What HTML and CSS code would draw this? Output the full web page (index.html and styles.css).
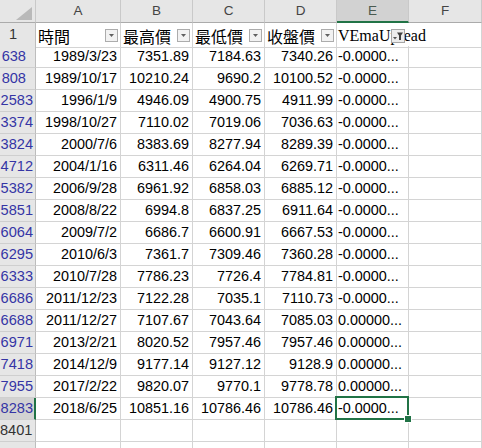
FILE: index.html
```html
<!DOCTYPE html>
<html lang="zh-Hant">
<head>
<meta charset="utf-8">
<title>Sheet</title>
<link rel="stylesheet" href="styles.css">
</head>
<body>
<div class="sheet">
  <div class="row hdr">
    <div class="corner"><svg width="35" height="22" viewBox="0 0 35 22"><polygon points="32,7 32,20 16,20" fill="#b9b9b9"/></svg></div>
    <div class="ch">A</div>
    <div class="ch">B</div>
    <div class="ch">C</div>
    <div class="ch">D</div>
    <div class="ch sel">E</div>
    <div class="ch">F</div>
  </div>
  <div class="row r1">
    <div class="rh one">1</div>
    <div class="th"><span class="tt">時間</span><span class="fb"><svg width="11" height="11" viewBox="0 0 11 11"><polygon points="3,4 8,4 5.5,7" fill="#606060"/></svg></span></div>
    <div class="th"><span class="tt">最高價</span><span class="fb"><svg width="11" height="11" viewBox="0 0 11 11"><polygon points="3,4 8,4 5.5,7" fill="#606060"/></svg></span></div>
    <div class="th"><span class="tt">最低價</span><span class="fb"><svg width="11" height="11" viewBox="0 0 11 11"><polygon points="3,4 8,4 5.5,7" fill="#606060"/></svg></span></div>
    <div class="th"><span class="tt">收盤價</span><span class="fb"><svg width="11" height="11" viewBox="0 0 11 11"><polygon points="3,4 8,4 5.5,7" fill="#606060"/></svg></span></div>
    <div class="th th-e"><span class="tt latin">VEmaUpread</span><span class="fb fb-on"><svg width="12" height="12" viewBox="0 0 12 12"><polygon points="1,7 5,7 3,9.5" fill="#555"/><polygon points="5,2.5 11,2.5 9,5.5 9,10 7,10 7,5.5" fill="#404040"/></svg></span></div>
    <div class="empty noline"></div>
  </div>

  <div class="row"><div class="rh b3">638</div><div class="n">1989/3/23</div><div class="n">7351.89</div><div class="n">7184.63</div><div class="n">7340.26</div><div class="t">-0.0000...</div><div class="empty"></div></div>
  <div class="row"><div class="rh b3">808</div><div class="n">1989/10/17</div><div class="n">10210.24</div><div class="n">9690.2</div><div class="n">10100.52</div><div class="t">-0.0000...</div><div class="empty"></div></div>
  <div class="row"><div class="rh b4">2583</div><div class="n">1996/1/9</div><div class="n">4946.09</div><div class="n">4900.75</div><div class="n">4911.99</div><div class="t">-0.0000...</div><div class="empty"></div></div>
  <div class="row"><div class="rh b4">3374</div><div class="n">1998/10/27</div><div class="n">7110.02</div><div class="n">7019.06</div><div class="n">7036.63</div><div class="t">-0.0000...</div><div class="empty"></div></div>
  <div class="row"><div class="rh b4">3824</div><div class="n">2000/7/6</div><div class="n">8383.69</div><div class="n">8277.94</div><div class="n">8289.39</div><div class="t">-0.0000...</div><div class="empty"></div></div>
  <div class="row"><div class="rh b4">4712</div><div class="n">2004/1/16</div><div class="n">6311.46</div><div class="n">6264.04</div><div class="n">6269.71</div><div class="t">-0.0000...</div><div class="empty"></div></div>
  <div class="row"><div class="rh b4">5382</div><div class="n">2006/9/28</div><div class="n">6961.92</div><div class="n">6858.03</div><div class="n">6885.12</div><div class="t">-0.0000...</div><div class="empty"></div></div>
  <div class="row"><div class="rh b4">5851</div><div class="n">2008/8/22</div><div class="n">6994.8</div><div class="n">6837.25</div><div class="n">6911.64</div><div class="t">-0.0000...</div><div class="empty"></div></div>
  <div class="row"><div class="rh b4">6064</div><div class="n">2009/7/2</div><div class="n">6686.7</div><div class="n">6600.91</div><div class="n">6667.53</div><div class="t">-0.0000...</div><div class="empty"></div></div>
  <div class="row"><div class="rh b4">6295</div><div class="n">2010/6/3</div><div class="n">7361.7</div><div class="n">7309.46</div><div class="n">7360.28</div><div class="t">-0.0000...</div><div class="empty"></div></div>
  <div class="row"><div class="rh b4">6333</div><div class="n">2010/7/28</div><div class="n">7786.23</div><div class="n">7726.4</div><div class="n">7784.81</div><div class="t">-0.0000...</div><div class="empty"></div></div>
  <div class="row"><div class="rh b4">6686</div><div class="n">2011/12/23</div><div class="n">7122.28</div><div class="n">7035.1</div><div class="n">7110.73</div><div class="t">-0.0000...</div><div class="empty"></div></div>
  <div class="row"><div class="rh b4">6688</div><div class="n">2011/12/27</div><div class="n">7107.67</div><div class="n">7043.64</div><div class="n">7085.03</div><div class="t">0.00000...</div><div class="empty"></div></div>
  <div class="row"><div class="rh b4">6971</div><div class="n">2013/2/21</div><div class="n">8020.52</div><div class="n">7957.46</div><div class="n">7957.46</div><div class="t">0.00000...</div><div class="empty"></div></div>
  <div class="row"><div class="rh b4">7418</div><div class="n">2014/12/9</div><div class="n">9177.14</div><div class="n">9127.12</div><div class="n">9128.9</div><div class="t">0.00000...</div><div class="empty"></div></div>
  <div class="row"><div class="rh b4">7955</div><div class="n">2017/2/22</div><div class="n">9820.07</div><div class="n">9770.1</div><div class="n">9778.78</div><div class="t">0.00000...</div><div class="empty"></div></div>
  <div class="row"><div class="rh b4 rsel">8283</div><div class="n">2018/6/25</div><div class="n">10851.16</div><div class="n">10786.46</div><div class="n">10786.46</div><div class="t active">-0.0000...<span class="cursor"><span class="handle"></span></span></div><div class="empty"></div></div>
  <div class="row"><div class="rh k4">8401</div><div class="empty"></div><div class="empty"></div><div class="empty"></div><div class="empty"></div><div class="empty"></div><div class="empty"></div></div>
  <div class="row"><div class="rh"></div><div class="empty"></div><div class="empty"></div><div class="empty"></div><div class="empty"></div><div class="empty"></div><div class="empty"></div></div>
</div>
</body>
</html>
```

FILE: styles.css
```css
html, body {
  margin: 0;
  padding: 0;
  background: #ffffff;
}

.sheet {
  width: 482px;
  height: 448px;
  overflow: hidden;
  font-family: "Liberation Sans", Arial, sans-serif;
  font-size: 14.4px;
  color: #000;
}

.row {
  display: grid;
  grid-template-columns: 36px 85px 72px 72px 72px 72px 73px;
  height: 22px;
}

.row > div {
  box-sizing: border-box;
  border-right: 1px solid #d4d4d4;
  border-bottom: 1px solid #d4d4d4;
  white-space: nowrap;
  overflow: hidden;
  line-height: 21px;
}

/* column header row */
.row.hdr {
  height: 23px;
}
.row.hdr > div {
  background: #e6e6e6;
  border-right: 1px solid #c9c9c9;
  border-bottom: 1px solid #ababab;
}
.corner svg {
  display: block;
}
.ch {
  text-align: center;
  font-size: 13.5px;
  line-height: 22px;
  color: #444;
}
.row.hdr > .ch.sel {
  background: #d2d2d2;
  color: #4a5a50;
  border-bottom: 2px solid #217346;
}

/* row headers */
.row > .rh {
  background: #e6e6e6;
  border-right: 1px solid #bdbdbd;
  border-bottom: 1px solid #cfcfcf;
  text-align: right;
  color: #3535a5;
  font-size: 14.6px;
  line-height: 21px;
}
.rh.b4 { padding-right: 2px; }
.rh.b3 { padding-right: 9px; }
.rh.k4 { padding-right: 6px; color: #333; }
.rh.one { padding-right: 18px; color: #333; line-height: 22px; }
.row > .rh.rsel {
  background: #d2d2d2;
  border-right: 2px solid #217346;
  padding-right: 1px;
}

/* header row 1 */
.row.r1 {
  height: 23px;
}
.th {
  display: flex;
  align-items: center;
  padding-left: 2px;
  font-family: "Liberation Serif", "Noto Sans CJK TC", serif;
  font-size: 16px;
}
.tt {
  flex: 1;
  line-height: 22px;
  padding-top: 2px;
  font-family: "Noto Sans CJK TC", sans-serif;
  overflow: hidden;
}
.tt.latin {
  font-family: "Liberation Serif", serif;
  overflow: visible;
}
.fb {
  width: 11px;
  height: 11px;
  margin-right: 2px;
  margin-top: 1px;
  background: #f2f2f2;
  border: 1px solid #acacac;
  flex: none;
}
.fb svg {
  display: block;
}
.row > .th-e {
  overflow: visible;
  position: relative;
  border-right: none;
  padding-left: 1px;
}
.th-e .tt {
  flex: none;
}
.fb-on {
  position: absolute;
  left: 54px;
  top: 5px;
  width: 12px;
  height: 12px;
  background: #ececec;
  border: 1px solid #a6a6a6;
}
.row > .noline {
  background: transparent;
}

/* data cells */
.n {
  text-align: right;
  padding-right: 3px;
}
.t {
  text-align: left;
  padding-left: 1px;
}
.row > .t.active {
  overflow: visible;
  position: relative;
}
.cursor {
  position: absolute;
  left: -2px;
  top: -2px;
  width: 74px;
  height: 24px;
  box-sizing: border-box;
  border: 2px solid #217346;
}
.handle {
  position: absolute;
  right: -5px;
  bottom: -5px;
  width: 6px;
  height: 6px;
  background: #217346;
  border: 1px solid #ffffff;
}
```
